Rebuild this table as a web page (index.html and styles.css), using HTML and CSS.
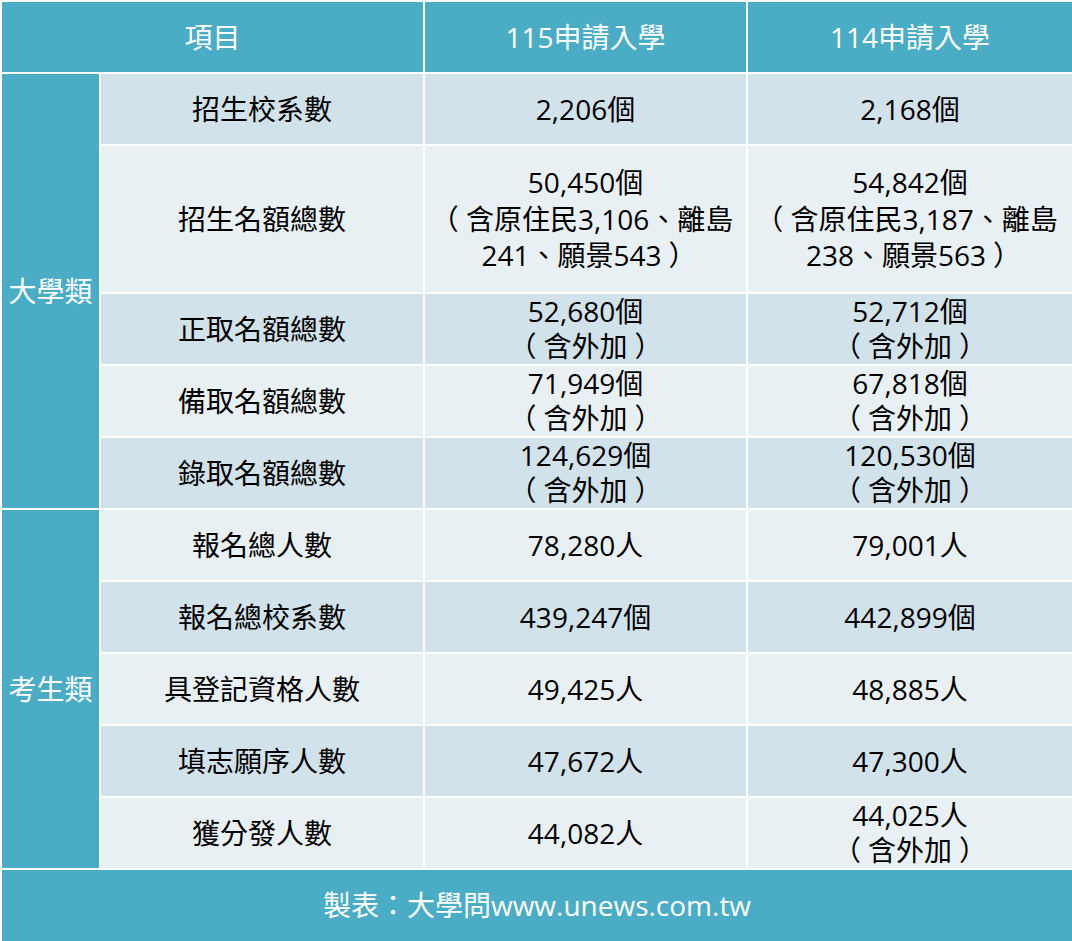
FILE: index.html
```html
<!DOCTYPE html>
<html lang="zh-Hant">
<head>
<meta charset="utf-8">
<title>115申請入學</title>
<link rel="stylesheet" href="styles.css">
</head>
<body>
<table class="stats">
  <colgroup>
    <col class="c-cat">
    <col class="c-item">
    <col class="c-val">
    <col class="c-val2">
  </colgroup>
  <thead>
    <tr class="head">
      <th colspan="2">項目</th>
      <th>115申請入學</th>
      <th>114申請入學</th>
    </tr>
  </thead>
  <tbody>
    <tr class="dark">
      <th class="cat" rowspan="5">大學類</th>
      <td>招生校系數</td>
      <td>2,206個</td>
      <td>2,168個</td>
    </tr>
    <tr class="light tall">
      <td>招生名額總數</td>
      <td>50,450個<br><span class="lp">（</span>含原住民3,106、離島<br>241、願景543<span class="rp">）</span></td>
      <td>54,842個<br><span class="lp">（</span>含原住民3,187、離島<br>238、願景563<span class="rp">）</span></td>
    </tr>
    <tr class="dark">
      <td>正取名額總數</td>
      <td>52,680個<br><span class="lp">（</span>含外加<span class="rp">）</span></td>
      <td>52,712個<br><span class="lp">（</span>含外加<span class="rp">）</span></td>
    </tr>
    <tr class="light">
      <td>備取名額總數</td>
      <td>71,949個<br><span class="lp">（</span>含外加<span class="rp">）</span></td>
      <td>67,818個<br><span class="lp">（</span>含外加<span class="rp">）</span></td>
    </tr>
    <tr class="dark">
      <td>錄取名額總數</td>
      <td>124,629個<br><span class="lp">（</span>含外加<span class="rp">）</span></td>
      <td>120,530個<br><span class="lp">（</span>含外加<span class="rp">）</span></td>
    </tr>
    <tr class="light">
      <th class="cat" rowspan="5">考生類</th>
      <td>報名總人數</td>
      <td>78,280人</td>
      <td>79,001人</td>
    </tr>
    <tr class="dark">
      <td>報名總校系數</td>
      <td>439,247個</td>
      <td>442,899個</td>
    </tr>
    <tr class="light">
      <td>具登記資格人數</td>
      <td>49,425人</td>
      <td>48,885人</td>
    </tr>
    <tr class="dark">
      <td>填志願序人數</td>
      <td>47,672人</td>
      <td>47,300人</td>
    </tr>
    <tr class="light">
      <td>獲分發人數</td>
      <td>44,082人</td>
      <td>44,025人<br><span class="lp">（</span>含外加<span class="rp">）</span></td>
    </tr>
  </tbody>
  <tfoot>
    <tr class="foot">
      <td colspan="4">製表：大學問www.unews.com.tw</td>
    </tr>
  </tfoot>
</table>
</body>
</html>
```

FILE: styles.css
```css
html, body {
  margin: 0;
  padding: 0;
  background: #ffffff;
}

.stats {
  width: 1072px;
  border-collapse: collapse;
  table-layout: fixed;
  font-family: "Open Sans", "Noto Sans CJK TC", sans-serif;
  font-size: 28px;
  line-height: 35px;
  font-weight: 400;
  color: #000000;
}

.c-cat { width: 99px; }
.c-item { width: 324px; }
.c-val { width: 323px; }
.c-val2 { width: 326px; }

.stats th,
.stats td {
  border: 2px solid #ffffff;
  padding: 0;
  text-align: center;
  vertical-align: middle;
  white-space: nowrap;
  font-weight: 400;
  overflow: hidden;
}

.stats tr { height: 72px; }
.stats tr.tall { height: 148px; }
.stats tr.tall td { line-height: 36.5px; }

/* centre the full-width brackets like the original font does */
.lp {
  display: inline-block;
  margin-left: -7px;
  margin-right: 7px;
}

.rp {
  display: inline-block;
  margin-left: 7px;
  margin-right: -7px;
}

.head th {
  background: #4bacc6;
  color: #ffffff;
}

.stats th.cat {
  background: #4bacc6;
  color: #ffffff;
}

.dark td { background: #d1e2ea; }
.light td { background: #e9f0f4; }

.foot td {
  background: #4bacc6;
  color: #ffffff;
  height: 71px;
}
```
